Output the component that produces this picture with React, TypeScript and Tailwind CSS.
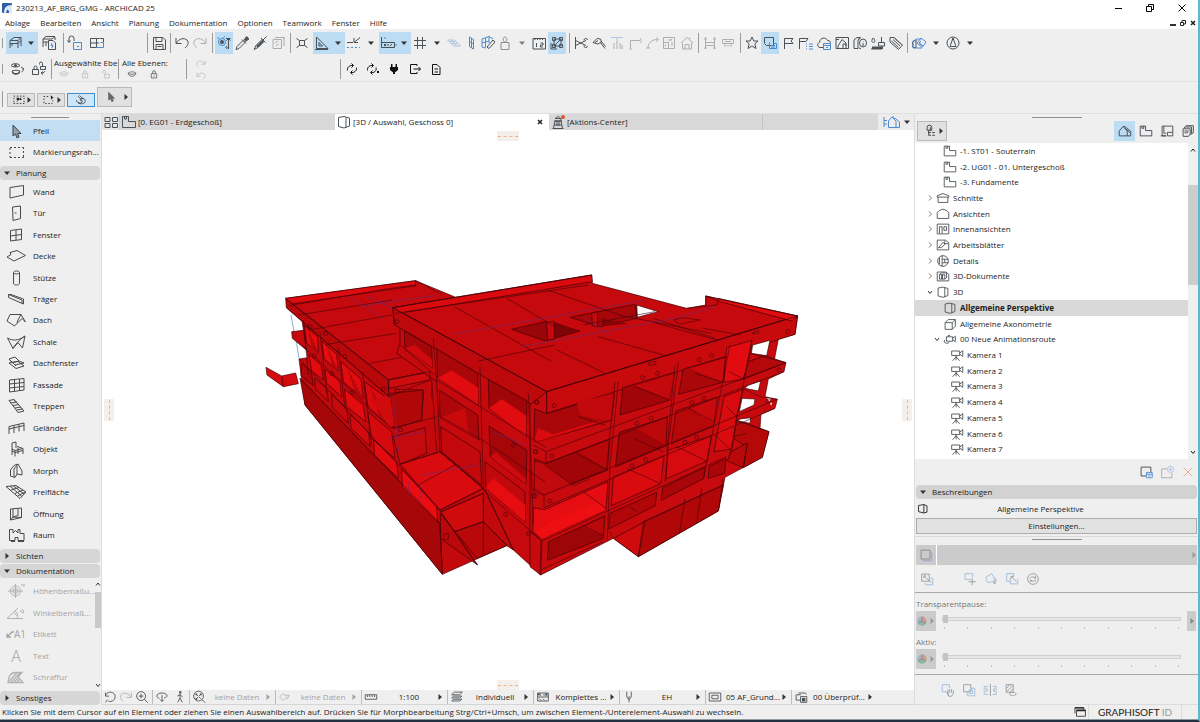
import { ReactNode, useState } from "react";
import clsx from "clsx";

interface Shape {
  d?: string;
  blue?: string;
  fill?: string;
}

// 18 x 18 glyphs of the tool bars
const glyphs: Record<string, Shape> = {
  desk: { d: "M4 6.500L8 3.500H15L12 6.500ZM4 6.500V14M4 9.500H12M12 6.500V14M15 3.500V12M6 9.500V12M12 9.500L15 6.500" },
  deskInfo: { d: "M3 5L6 2.500H15L12 5ZM3 5V13M3 8H8M6 8V12M15 3V6M8.500 6.500H13L15.500 9V15.500H8.500Z", blue: "M12 9L11 11.500H13L12 14" },
  inject: { d: "M3 8V4.500A2.500 2.500 0 0 1 8 4.500V7M1.500 6.500L3 8.500L4.500 6.500", blue: "M7.500 8.500H15.500V15.500H7.500ZM11 12.500H13" },
  book: { d: "M2.500 4.500H8.500V13.500H2.500ZM8.500 4.500H11M2.500 9H11M11.500 4.500H15.500V8", blue: "M8.500 13.500H15.500V8.500H12.500" },
  save: { d: "M3.500 3.500H13L15.500 6V15.500H3.500ZM6 3.500V7.500H12V3.500M6 15.500V10.500H13V15.500M7.500 12.500H11.500" },
  undo: { d: "M3 4V9.500H8.500M3.500 9C6 4.500 11 3.500 14 6C16.500 9 14.500 12 12 14" },
  redo: { d: "M15 4V9.500H9.500M14.500 9C12 4.500 7 3.500 4 6C1.500 9 3.500 12 6 14" },
  magnifySel: { d: "M11 4.500H15.500M13.500 4.500V15M11.500 6.500L13.500 4.500L15.500 6.500M11 12L13 14.500", blue: "M3.500 8A3.500 3.500 0 1 0 10.500 8A3.500 3.500 0 1 0 3.500 8M10 13L12 15M2.500 3.500L4.500 5M8 4L10 2.500", fill: "M5 8A2 2 0 1 0 9 8A2 2 0 1 0 5 8" },
  pipette: { d: "M3 15.500L4 12.500L10 6.500L12 8.500L6 14.500ZM9 5.500L13 9.500M11 6L13.500 2.500L16 5L12.500 7.500", fill: "M11 6L14 2.500L16 4.500L12.500 7.500Z" },
  syringe: { d: "M3 15.500L5 11.500L11 5.500L13 7.500L7 13.500ZM10 4L14.500 8.500M12 6L15.500 2.500", fill: "M5 12L11.500 6L13 7.500L7 13.500Z" },
  paste: { d: "M4 5.500H12.500V14.500H4ZM6 3.500H15V12M6 9L9 7M7 12L10 9.500M14 5L16 3" },
  suspend: { d: "M6.500 6.500H11.500V11.500H6.500ZM3.500 4.500L6.500 6.500M14.500 4.500L11.500 6.500M3.500 13.500L6.500 11.500M14.500 13.500L11.500 11.500" },
  setsquare: { d: "M3.500 3V14.500H15ZM6 8.500V12H9.500ZM2 15.500H15" },
  guide: { d: "M2 8.500H8M9 8.500L15 3.500M9 4V8.500H13", blue: "M2 13.500H4M6 13.500H8M10 13.500H12M14 13.500H15" },
  tracker: { d: "M2.500 3V13M2.500 8.500H15.500V13.500H2.500ZM5 10L7 12M7 10L5 12M9 10V12M13 10L11 12", blue: "M5 3L7 5M16 11H18" },
  grid: { d: "M6.500 3V15M11.500 3V15M3 6.500H15M3 11.500H15" },
  plane: { blue: "M2.500 6H9.500L15.500 12H8.500ZM4 7.500H11M6 9.500H13M6 6L12 12" },
  planeV: { blue: "M7.500 3L11.500 5.500V15L7.500 12.500ZM9.500 4V14M7.500 7.500L11.500 10" },
  planeEdit: { d: "M8 13L14 6L16 8L10 14.500Z", blue: "M3 5L10 2.500L14 5M3 5V13L7 14M3 9L10 7M6.500 4V13M10 2.500V9" },
  weight: { d: "M5 15.500V8.500H13V15.500ZM9 8.500C6 6.500 7 3 9 3S12 6.500 9 8.500" },
  ruler: { d: "M3 15V4.500H15.500V15ZM5 4V6M7.500 4V6M10 4V6M12.500 4V6M6.500 9V13M10.500 9H13V11H10.500V13H13" },
  nodes: { d: "M6 5H13V12H6ZM4.500 3.500H7.500V6.500H4.500ZM11.500 3.500H14.500V6.500H11.500ZM11.500 10.500H14.500V13.500H11.500ZM4.500 10.500H7.500V13.500H4.500ZM6 12L13 5M3 9V15H9" },
  scissor: { d: "M3.500 3V15M3.500 6.500L14 11.500M3.500 11.500L14 6.500M12 11.500A1.500 1.500 0 1 0 15.500 12M12 6.500A1.500 1.500 0 1 1 15.500 6" },
  hammer: { d: "M3 8.500L7 4.500L10.500 5L11.500 8L8 10ZM10 8L15 14.500M5 8.500L8 6.500M11 7L15.500 12.500" },
  extend: { d: "M6 9V15M9 7V15M12 9V15M14 11V15", blue: "M3 3.500H15M9 4V8" },
  corner: { d: "M4.500 14V6.500H14M14 4L15.500 6.500L14 9M3 15H6" },
  curve: { d: "M5 14C5 9 9 5.500 14 5.500M13 3.500L15.500 5.500L13 7.500M3 14H7" },
  resize: { d: "M3.500 3.500H14.500V14.500H3.500ZM3.500 8.500H8.500V14.500M8 6L12 6M12 6L11 5M12 8V12M5.500 10.500V12.500" },
  home: { d: "M3 9L9 3.500L15 9M4.500 9V15H13.500V9M7 15V10.500H11V15M12 5V3.500" },
  dimH: { d: "M4.500 3V15M13.500 3V15M3 5H6M12 5H15M4.500 8.500H13.500M4.500 11.500H13.500M3 14H6M12 14H15" },
  dimW: { d: "M3.500 5.500H14.500V9.500H3.500ZM6 9.500V13M12 9.500V13M8 11.500H10M6 7.500H12" },
  star: { d: "M9 3L10.800 7H15L11.800 9.800L13 14.500L9 12L5 14.500L6.200 9.800L3 7H7.200Z" },
  layers: { d: "M3.500 3.500H12.500V11.500H5.500L3.500 9.500Z", blue: "M8.500 8.500V14.500H15.500V9.500H12.500M10 11.500H14M10 13H14" },
  flag: { d: "M5.500 15V4.500H14L12 7L14 9.500H5.500" },
  flagList: { d: "M2.500 15V4.500H11L9 7.500H2.500", blue: "M9 10H10M12 10H16M9 12.500H10M12 12.500H16M9 15H10M12 15H16" },
  cloud: { d: "M8 13.500H5C2 13 2 9 4.500 8.500C5 3 11 3 12.500 6.500C15 6.500 15.500 8 15.500 9", blue: "M8.500 9.500H15.500V15.500H8.500ZM8.500 11.500H15.500M11 13.500H13" },
  houseDoc: { d: "M3 3.500H15.500V14.500H3ZM5 12L9 5.500L13 9V12M10 14V10H13V14M3 5.500H6M5 12V14" },
  docInfo: { d: "M3 6L6 3.500H9L7 6V14.500H3ZM7 6L10 3.500M8 14L10 14.500M8.500 9A3.500 4 0 1 0 15.500 9A3.500 4 0 1 0 8.500 9M12 7V7.500M12 9V12" },
  paint: { d: "M4 4C2 7 3 8.500 4.500 8.500S6.500 7 4.500 4M12.500 3V8M9.500 8.500H15.500V12H9.500ZM2 15H13", fill: "M3 12.500H14V15H3Z" },
  tag: { d: "M3 3.500H7L15.500 11L11.500 15.500L3 8ZM6 5.500L13 12M4.500 7L11.500 13.500M8 4.500L14.500 10.500" },
  model: { d: "M2.500 8L6 6V13.500H3Z", blue: "M3 7L7 5H11M7 9L11 4L16 8L12 13.500ZM3 7V14H12M9 8.500L13 12M11 7A2 2 0 1 0 12 11" },
  compass: { d: "M3 9A6 6 0 1 0 15 9A6 6 0 1 0 3 9M9 4L6 12.500H12ZM9 4V6" },
  eyes: { d: "M3 5.500C5 3 10 3 12 5.500C10 7.500 5 7.500 3 5.500M4 11C7 10 9 10 12 11C10 15 6 15 4 11M13 7C16 8 16 11 13.500 12M14.500 9.500L16 8", fill: "M6 5.500A1.500 1.500 0 1 0 9 5.500A1.500 1.500 0 1 0 6 5.500M4 11C6 14 10 14 12 11L12 13C9 15.500 6 15 4 13Z" },
  locks: { d: "M2.500 9.500H8.500V14.500H2.500ZM4 9.500V7.500A1.500 1.500 0 0 1 7 7.500V9.500M9.500 4.500V3.500A1.500 1.500 0 0 1 12.500 3.500V6.500M10.500 6.500H15.500V9.500H10.500ZM11 13C14 13 15 12 14.500 11M13 14.500L11 13L13 11.500" },
  refresh: { d: "M4.500 10.500C4 7 7 5 10 5.500M8.500 3.500L10.500 5.500L8.500 7.500M13.500 7.500C14 11 11 13 8 12.500M9.500 10.500L7.500 12.500L9.500 14.500" },
  refreshDot: { d: "M3.500 10.500C3 7 6 5 9 5.500M7.500 3.500L9.500 5.500L7.500 7.500M12 7.500C13 11 10 13 7 12.500M8.500 10.500L6.500 12.500L8.500 14.500", fill: "M13 11H15V13H13Z" },
  plug: { fill: "M6 4H7.500V7H10.500V4H12V7H13V10L10.500 12H10V14H8V12H7.500L5 10V7H6Z" },
  exit: { d: "M11 6V4.500H4.500V13.500H11V12M7.500 9H14.500M12.500 7L14.500 9L12.500 11" },
  doc: { d: "M5.500 4.500H10L13 7.500V14.500H5.500ZM7.500 9H11M7.500 12H11" },
  marquee: { d: "M2 4H4M6 4H8M10 4H12M14 4H16M2 13.500H4M6 13.500H8M10 13.500H12M14 13.500H16M2.500 6V8M2.500 10V12M15.500 6V8M15.500 10V12M6 11L12 6", fill: "M6 6H9V9H6ZM10 6L13 9L10 9Z" },
  marqueeArrow: { d: "M2 4.500H4M6 4.500H8M2.500 7V9M2.500 11V13M4 13.500H6M8 13.500H10M12 13.500H13.500M14 9.500V11", fill: "M11 3L15 6L13 7L12 9Z" },
  spiral: { d: "M3 9C4 14 11 15.500 14 12C15.500 9 13 6 10 7C7 8 8 11 10.500 10.500M5 4L11 10M7 3L12 8M5 12C7 13.500 10 13 11 11" },
  cursor: { d: "M6 3L6 13L8.500 11L10 15L12 14L10.500 10.500H13.500Z", fill: "M6 3L6 13L8.500 11L10 15L12 14L10.500 10.500H13.500Z" },
  tiles: { d: "M3 4.500H8V8.500H3ZM10.500 4.500H15.500V8.500H10.500ZM3 10.500H8V14.500H3ZM10.500 10.500H15.500V14.500H10.500Z" },
  storey: { d: "M2.500 3.500H8.500V8.500H15.500V14.500H2.500ZM4.500 3.500V6H6.500V3.500" },
  box3d: { d: "M3.500 4.500L9 3.500L14.500 5V13L9 15L3.500 13.500ZM11 4.500V14.500" },
  box3dDark: { d: "M4 5L10 4V13.500L4 12ZM10 4L13.500 5.500V12.500L10 13.500" },
  tower: { d: "M6 8L4.500 15.500H13.500L12 8ZM5 8H13M6 5.500H12V8M7 5.500C7 3 11 3 11 5.500M8 8V13M10 8V13M5 12H13M3.500 15.500H14.500" },
  viewHouse: { blue: "M2 4V14M2 7.500H5M2 11H5M6.500 14.500V8L10 4L14 8V14.500ZM12 5.500H13.500L17.500 9V14.500H14M10 4H12" },
  navHouse: { d: "M2.500 14.500V9L7 4L11.500 9V14.500ZM7 4H9L15.500 9.500V14.500H11.500M9 6L15 11" },
  layout: { d: "M5.500 3.500H3.500V14.500H8M5.500 3.500V11.500H8M5.500 3.500H15.500V14.500H9.500V10.500H15M2 14.500H8" },
  stack: { d: "M3.500 6.500H11.500V12.500L9.500 15H3.500ZM5 6V4.500H13V12L11.500 13M7 4V3H15V11L13 12.500M5 9H10M5 11H9" },
  tree: { d: "M4 4.500A3 3 0 0 1 10 4.500V8H4ZM6 8V14.500H9M6 11H9M8 4V8M10.500 11H14M10.500 14.500H14" },
  section: { d: "M2.500 6.500L9 4L15.500 6.500V8H2.500ZM3.500 8V14H14.500V8" },
  elevation: { d: "M2.500 14V7.500L5 5L9 3.500L13 5L15.500 7.500V14Z" },
  interior: { d: "M2.500 3.500H15.500V14.500H2.500ZM5 14V6.500H8V14M10 6.500H13V10.500H10Z" },
  worksheet: { d: "M2.500 3.500H12L15.500 6.500V14.500H2.500ZM4 12L9 6L11.500 8L7 12ZM11 4V7.500H15" },
  detail: { d: "M3 9A6 6 0 1 0 15 9A6 6 0 1 0 3 9M8 3V15M5 5V13M8 7H15M8 11H15M11 7V11" },
  doc3d: { d: "M2.500 4.500H12L15.500 7V14.500H2.500ZM5 7.500H11V12.500H5ZM5 7.500L7 5.500H13V11L11 12.500", fill: "M7 8H9V12.500H7Z" },
  axo: { d: "M3.500 7.500L7 4H15L11.500 7.500ZM3.500 7.500V15H11.500V7.500M15 4V11.500L11.500 15" },
  route: { d: "M5 6.500H12V11.500H5ZM12 8L15 6V12L12 10M3 10C1 13 5 15 8 13M7 6.500V5H9" },
  camera: { d: "M3 4.500H12V9.500H3ZM12 7L15.500 4V10.500L12 8M8 9.500V12M8 11L4 15.500M8 11L12 15.500M8 11V15" },
  newView: { d: "M9 13.500H3.500V3.500H14.500V9", blue: "M9.500 9.500H16V15.500H9.500ZM9.500 11.500H16M11.500 13.500H14" },
  newFolder: { d: "M9 5.500H3V15.500H14.500V10", blue: "M9.500 6A3.500 3.500 0 1 0 16.500 6A3.500 3.500 0 1 0 9.500 6M13 4V8M11 6H15" },
  close: { d: "M4 4L14 14M14 4L4 14" },
  square: { d: "M3.500 3.500H13.500V13.500H3.500Z", blue: "M5.500 15.500H15.500V5.500" },
  swap: { d: "M3 3.500H11.500V11.500H3ZM5.500 5.500L14 13M5.500 8V5.500H8", blue: "M7 13.500V15.500H15.500V8H13" },
  moveBox: { d: "M11.500 8V16M7.500 12H15.500", blue: "M10 9.500H3.500V3H12V7" },
  rotateBox: { d: "M13 8C16 10 15 12 12 13.500M13 11L12 13.500L14.500 14", blue: "M3 7L10 3L13 9L11 12L5 13Z" },
  mirrorBox: { d: "M8 6L14 12M8 9V6H11", blue: "M8 11.500H3V3H11V6M7 8V14.500H15.500V9" },
  cycle: { d: "M3 9A6 6 0 1 0 15 9A6 6 0 1 0 3 9M5.500 8.500C7 6 10 6 12 8M12 5.500V8H10M12.500 10C11 12 8 12 6 10.500M6 12.500V10.500H8" },
  hand: { d: "M9 13L7.500 11M9 15L9 8.500M11 8V12M13 8V12M15 9.500V13L13 16H10L8 12", blue: "M8 11H2.500V3H10.500V7" },
  overlap: { d: "M3 3H11V11H3Z", blue: "M7 11V15.500H15.500V7H11M9 9H13V13H9Z" },
  splitV: { d: "M9.500 2V16M4 7L6.500 9L4 11M15 7L12.500 9L15 11", blue: "M7 5H2.500V14H7M12 5H16V14H12" },
  hatch: { d: "M3.500 3H11.500V11.500H3.500ZM4 7L8 3M4 11L11 4M8 11L11 8M7 13.500C9 11 13 11 15 13.500C13 16 9 16 7 13.500" },
  zoomBack: { d: "M4 7.500C5 3 12 2 14.500 6.500C16 12 11 15.500 7 13.500M4 4V8H8M6 12L4 15" },
  zoomIn: { d: "M3 8A5 5 0 1 0 13 8A5 5 0 1 0 3 8M11.500 11.500L15.500 15.500M8 5.500V10.500M5.500 8H10.500" },
  orbit: { d: "M6 10.500C1 9 3 4.500 9 4.500S17 9 11.500 10M9 7V14M7 12L9 14L11 12" },
  walk: { d: "M9 5V10L6.500 15M9 10L11.500 15M6 8L9 6.500L12 9", fill: "M8 2.500H10.500V5H8Z" },
  zoomFit: { d: "M3 8A5.500 5.500 0 1 0 14 8A5.500 5.500 0 1 0 3 8M12.500 12L16 15.500M6 6L8 8M11 6L9 8M6 11L8 9M11 11L9 9", fill: "M5 5H7V7H5ZM10 5H12V7H10ZM5 10H7V12H5Z" },
  angle: { d: "M3 9L7 5L11 9L7 13ZM9 7L14 7L11 12" },
  scale: { d: "M2.500 6.500H15.500V11.500H2.500ZM5 7V9M7.500 7V9M10.500 7V9M13 7V9" },
  strata: { d: "M3 6.500L6 3.500H15L12 6.500ZM3 10L5 8H14.500L12 10ZM3 13.500L5 11.500H14.500L12 13.500Z" },
  structure: { d: "M3 4.500H15V13.500H3ZM3 9H15M5 6L7 8M9 6L11 8M5 11L7 13M9 11L11 13M12 6L14 8", fill: "M3 5H6V7H3ZM11 5H14V7H11Z" },
  pen: { d: "M6.500 3V9L9 12L11.500 9V3M9 12V15M9 8V12" },
  frame: { d: "M2.500 4.500H15.500V13.500H2.500ZM5.500 7H12.500V11H5.500Z" },
  renovation: { d: "M9 6.500H3.500V12.500H8M6 4.500H14L15 6M8.500 8.500H15.500V15H8.500Z", fill: "M10 10H14V14H10Z" },
  windows: { d: "M2.500 11V3.500H14V6M4.500 6.500H16V14.500H4.500Z", fill: "M4.500 6H16V8H4.500ZM2.500 3H14V4.500H2.500Z" },
  eye: { d: "M3 8C6 5 12 5 15 8C13 14 5 14 3 8M3 8C6 10 12 10 15 8" },
  lock: { d: "M5 8.500H13V15H5ZM7 8.500V6A2 2 0 0 1 11 6V8.500M9 11V13" },
  unlock: { d: "M7 9.500H14V15H7ZM4 8V5.500A2 2 0 0 1 8 5.500V9.500" },
};

// 20 x 16 glyphs of the toolbox
const toolPaths: Record<string, string> = {
  Pfeil: "M7 2L7 13L9.500 11L11 15L13 14L11.500 10.500H15Z",
  "Markierungsrah...": "M4 3.500H6M8 3.500H10M12 3.500H14M16 3.500H17.500V5M17.500 7V9M17.500 11V13.500H16M14 13.500H12M10 13.500H8M6 13.500H4V12M4 10V8M4 6V4",
  Wand: "M4 3.500L17.500 1.500V11L4 14Z",
  Tür: "M6.500 2L14.500 1V13.500L7 15.500ZM8.500 8H10.500",
  Fenster: "M4.500 3.500L15.500 2V12.500L4.500 14ZM10 3V13M4.500 9L15.500 7.500",
  Decke: "M1 9L5 6.500L4 4.500L11 2.500L19.500 7.500L8 13Z",
  Stütze: "M7.500 2.500C8 .5 13 .5 13.500 2.500V13.500C13 15.500 8 15.500 7.500 13.500ZM7.500 2.500C8 4.500 13 4.500 13.500 2.500",
  Träger: "M2.500 3.500L5 3.500L17.500 8V13L2.500 6.500ZM2.500 3.500L16 9V12.500",
  Dach: "M1 9L4 2.500H15L19.500 10L16 6.500L12 10.500L8.500 14ZM15 2.500L12 8L11 11",
  Schale: "M1.500 4C7 7 12 7 19 2L16.500 14L12 8.500L7 14.500ZM7 14.500C8 12 13 6 19 2",
  Dachfenster: "M3 4L9 2L13 6L6 7.500ZM3 8L12 6.500L18 11L10 13.500ZM3 4L10 11M13 6L18 8L9 10",
  Fassade: "M3.500 3L18 1.500V13L3.500 15ZM8.500 2.500V14.500M13.500 2V13.500M3.500 7L18 5.500M3.500 11L18 9.500",
  Treppen: "M3 2.500L8 1.500L18 13L12 14.500ZM5 5L11 4M7 7.500L13 6.500M9 10L15 9M10.500 12L17 11M8 1.500L9 3.500",
  Geländer: "M3 14V6.500L18 3V11M3 9L18 5.500M8 13V5.500M13 11.500V4.500",
  Objekt: "M6 8V2L10 1V7M6 8L9 9.500L17 7.500L11 5.500M6 8V14M9 9.500V15.500M17 7.500V13M12 7V13M6 10L9 11.500L17 9.500",
  Morph: "M4.500 13V7L8 2.500L12 1L16 8V12L11 11L9 14.500ZM8 14V6L12 1M11 11V3",
  Freifläche: "M0 2.500L10 1.500L20 8L14 14.500ZM4 2L16 12.500M7.500 2L18 10M5 6L13 3.500M9 9.500L17 6M11.500 12L19 8",
  Öffnung: "M4.500 3L15.500 2V11.500L4.500 14ZM7 3V11L15.500 11.500M12 2.500V9.500L7 11M4.500 14L7 11",
  Raum: "M3.500 2.500H7V6L9.500 3.500L12 6V2.500H14V6.500H18V13.500H12V10.500H9V13.500H3.500ZM5 14.500H9M12 14.500H18",
  "Höhenbemaßu...": "M4.500 8A5 5 0 1 0 14.500 8A5 5 0 1 0 4.500 8M9.500 1V15M2 8H17M7 8A2.500 2.500 0 1 0 12 8A2.500 2.500 0 1 0 7 8M15 2H17M18 1V4",
  "Winkelbemaß...": "M1 13.500H17M1 13.500L12 3M9 5.500C12 8 12 11 11 13.500M8 8L12 11M15 5A1.500 1.500 0 1 0 18 7L16 4",
};

interface GlyphProps {
  name: string;
  className?: string;
}

function Glyph({ name, className = "size-[18px] text-[#4a5157]" }: GlyphProps) {
  const { d, blue, fill } = glyphs[name];

  return (
    <svg viewBox="0 0 18 18" fill="none" stroke="currentColor" className={clsx("shrink-0", className)}>
      {fill && <path d={fill} fill="currentColor" stroke="none" />}
      {d && <path d={d} />}
      {blue && <path d={blue} stroke="#4c8ad0" />}
    </svg>
  );
}

function Arrow({ dir = "right", className = "text-[#333]" }: { dir?: "right" | "down"; className?: string }) {
  return (
    <svg viewBox="0 0 6 6" className={clsx("size-1.5 shrink-0", className)}>
      <path d={dir === "right" ? "M1.500 0L5 3L1.500 6Z" : "M0 1.500H6L3 5Z"} fill="currentColor" />
    </svg>
  );
}

function Chevron({ dir }: { dir: "up" | "down" | "right" }) {
  const paths = { up: "M1 4.500L3 2L5 4.500", down: "M1 2L3 4.500L5 2", right: "M2 .5L4.500 3L2 5.500" };

  return (
    <svg viewBox="0 0 6 6" className="size-1.5 shrink-0" fill="none" stroke="currentColor">
      <path d={paths[dir]} />
    </svg>
  );
}

function Sep() {
  return (
    <span className="w-1.5 shrink-0 flex justify-center">
      <span className="w-px h-5 bg-[#9b9b9b]" />
    </span>
  );
}

interface ToolProps {
  icon: string;
  on?: boolean;
  off?: boolean;
  arrow?: boolean;
  slim?: boolean;
}

function Tool({ icon, on, off, arrow, slim }: ToolProps) {
  return (
    <button
      aria-label={icon}
      className={clsx(
        "h-[22px] shrink-0 flex items-center",
        arrow ? (on ? "w-8" : "w-[34px]") : slim ? "w-[17px]" : "w-[18px]",
        on && "bg-[#bcdcf4]",
        off && "opacity-40"
      )}
    >
      <Glyph name={icon} />
      {arrow && (
        <span className="flex-1 flex justify-center">
          <Arrow dir="down" />
        </span>
      )}
    </button>
  );
}

const menus = ["Ablage", "Bearbeiten", "Ansicht", "Planung", "Dokumentation", "Optionen", "Teamwork", "Fenster", "Hilfe"];

function TitleBar() {
  return (
    <header className="bg-white">
      <div className="h-4 flex items-center pl-0.5">
        <svg viewBox="0 0 10 10" className="size-2.5">
          <rect width="10" height="10" rx="1" fill="#2d5fa8" />
          <path d="M2 10C2 5 4 2 10 2V10H7C7 7 6 6 5 7L4 10Z" fill="#dbe8f8" />
        </svg>
        <h1 className="ml-1 flex-1">230213_AF_BRG_GMG - ARCHICAD 25</h1>
        <button aria-label="Minimieren" className="w-8 flex justify-center">
          <span className="w-[7px] h-px bg-black" />
        </button>
        <button aria-label="Wiederherstellen" className="w-8 flex justify-center">
          <svg viewBox="0 0 8 8" className="size-2" fill="none" stroke="#000">
            <path d="M.5 2.500H5.500V7.500H.5ZM2.500 2V.5H7.500V5.500H6" />
          </svg>
        </button>
        <button aria-label="Schließen" className="w-8 flex justify-center">
          <svg viewBox="0 0 8 8" className="size-2" fill="none" stroke="#000">
            <path d="M.5 .5L7.500 7.500M7.500 .5L.5 7.500" />
          </svg>
        </button>
      </div>
      <nav className="h-[13px] flex items-center pl-[5px] gap-[10px]">
        {menus.map((menu) => (
          <button key={menu}>{menu}</button>
        ))}
        <div className="ml-auto flex items-center gap-1 pr-0.5">
          <span className="w-1.5 h-0.5 bg-[#333] mt-1" />
          <svg viewBox="0 0 6 6" className="size-1.5" fill="none" stroke="#222">
            <path d="M.5 2.500H3.500V5.500H.5ZM2 2V.5H5.500V4H4" />
          </svg>
          <svg viewBox="0 0 6 6" className="size-1.5" fill="none" stroke="#222">
            <path d="M1 1L5 5M5 1L1 5" strokeWidth="1.500" />
          </svg>
        </div>
      </nav>
    </header>
  );
}

function MainToolbar() {
  return (
    <div className="h-7 flex items-center pl-0.5">
      <span className="w-1 shrink-0">
        <span className="block w-px h-2.5 bg-[#9b9b9b]" />
      </span>
      <Tool icon="desk" on arrow />
      <span className="w-0.5" />
      <Tool icon="deskInfo" />
      <span className="w-0.5" />
      <Sep />
      <Tool icon="inject" />
      <span className="w-1" />
      <Tool icon="book" />
      <span className="w-[38px]" />
      <Sep />
      <Tool icon="save" slim />
      <Sep />
      <Tool icon="undo" />
      <Tool icon="redo" off />
      <Sep />
      <Tool icon="magnifySel" on />
      <Tool icon="pipette" />
      <Tool icon="syringe" />
      <Tool icon="paste" off />
      <Sep />
      <Tool icon="suspend" />
      <span className="w-0.5" />
      <Tool icon="setsquare" on arrow />
      <Tool icon="guide" arrow />
      <Tool icon="tracker" on arrow />
      <Tool icon="grid" arrow />
      <Tool icon="plane" slim off />
      <Tool icon="planeV" slim />
      <Tool icon="planeEdit" slim />
      <span className="flex opacity-60">
        <Tool icon="weight" arrow />
      </span>
      <Tool icon="ruler" />
      <Tool icon="nodes" on />
      <Sep />
      <Tool icon="scissor" />
      <Tool icon="hammer" />
      <Tool icon="extend" off />
      <Tool icon="corner" off slim />
      <Tool icon="curve" off slim />
      <Tool icon="resize" off />
      <Tool icon="home" off slim />
      <Sep />
      <Tool icon="dimH" off />
      <Tool icon="dimW" off />
      <Sep />
      <Tool icon="star" />
      <Tool icon="layers" on />
      <Tool icon="flag" />
      <Tool icon="flagList" />
      <Tool icon="cloud" />
      <Tool icon="houseDoc" />
      <Tool icon="docInfo" />
      <Tool icon="paint" />
      <Tool icon="tag" slim />
      <Sep />
      <Tool icon="model" arrow />
      <Tool icon="compass" arrow />
    </div>
  );
}

function LayerToolbar() {
  const small = "size-3 text-[#3d444a]";
  const smallOff = "size-3 text-[#b4b4b4]";

  return (
    <div className="h-[25px] flex items-center pl-0.5 border-b border-[#e2e2e2]">
      <span className="w-1.5">
        <span className="block w-px h-2.5 bg-[#9b9b9b]" />
      </span>
      <Tool icon="eyes" />
      <span className="w-1" />
      <Tool icon="locks" />
      <Sep />
      <div className="w-16 h-full flex flex-col whitespace-nowrap">
        <span className="h-[11px] pt-0.5">Ausgewählte Ebe</span>
        <div className="flex justify-between pl-1 pr-1.5">
          <Glyph name="eye" className={smallOff} />
          <Glyph name="lock" className={smallOff} />
          <Glyph name="unlock" className={smallOff} />
        </div>
      </div>
      <span className="w-1 h-5 border-l border-[#9b9b9b]" />
      <div className="w-[61px] h-full flex flex-col whitespace-nowrap">
        <span className="h-[11px] pt-0.5">Alle Ebenen:</span>
        <div className="flex gap-2.5 pl-1">
          <Glyph name="eye" className={small} />
          <Glyph name="lock" className={small} />
        </div>
      </div>
      <Sep />
      <div className="w-[148px] h-full flex flex-col pl-1.5 pt-px">
        <Glyph name="redo" className={smallOff} />
        <Glyph name="undo" className={smallOff} />
      </div>
      <Sep />
      <div className="flex gap-[3px]">
        {["refresh", "refreshDot", "plug", "exit", "doc"].map((icon) => (
          <button key={icon} aria-label={icon}>
            <Glyph name={icon} className="size-[18px] text-[#111]" />
          </button>
        ))}
      </div>
    </div>
  );
}

function SelectionToolbar() {
  const base = "h-3.5 w-7 border border-[#b9b9b9] bg-[#e1e1e1] flex items-center justify-between px-1";

  return (
    <div className="h-8 flex items-end pl-0.5 pb-1.5 border-b border-[#dedede]">
      <span className="w-px h-4 bg-[#9b9b9b] mr-1" />
      <button aria-label="Markierung" className={base}>
        <Glyph name="marquee" className="size-3.5 text-[#222]" />
        <Arrow />
      </button>
      <button aria-label="Auswahl" className={clsx(base, "ml-0.5")}>
        <Glyph name="marqueeArrow" className="size-3.5 text-[#222]" />
        <Arrow />
      </button>
      <button aria-label="Schnellwahl" className="h-3.5 w-7 ml-0.5 border border-[#3c8fd0] bg-[#cde6f8] flex items-center justify-center">
        <Glyph name="spiral" className="size-3.5 text-[#333]" />
      </button>
      <button aria-label="Pfeil" className="h-5 w-[35px] ml-0.5 border border-[#b9b9b9] bg-[#e1e1e1] flex items-center justify-between pl-1.5 pr-0.5">
        <Glyph name="cursor" className="size-3.5 text-[#666]" />
        <Arrow />
      </button>
    </div>
  );
}

const planning = [
  "Wand", "Tür", "Fenster", "Decke", "Stütze", "Träger", "Dach", "Schale", "Dachfenster",
  "Fassade", "Treppen", "Geländer", "Objekt", "Morph", "Freifläche", "Öffnung", "Raum",
];

const documentation = ["Höhenbemaßu...", "Winkelbemaß...", "Etikett", "Text", "Schraffur"];

function ToolIcon({ name }: { name: string }) {
  if (name === "Text") {
    return <span className="w-5 shrink-0 text-center text-[16px] leading-4 font-light">A</span>;
  }

  if (name === "Etikett") {
    return (
      <span className="w-5 h-4 shrink-0 flex items-center justify-end">
        <svg viewBox="0 0 8 8" className="size-2" fill="none" stroke="currentColor">
          <path d="M1 7L6 2H8M1 3.500V7H5" strokeWidth="1.300" />
        </svg>
        <span className="text-[10px] leading-4">A1</span>
      </span>
    );
  }

  return (
    <svg viewBox="0 0 20 16" className="w-5 h-4 shrink-0 opacity-80" fill="none" stroke="currentColor">
      {name === "Schraffur" ? (
        <path d="M2 13.500C2 8 5 3.500 9 3.500H16L12 8L17 13.500ZM3 12L11 4M5 13L14 4M8 13L12 9M11 13L14 10" strokeWidth="1.300" />
      ) : (
        <path d={toolPaths[name]} fill={name === "Pfeil" ? "#8a9096" : "none"} />
      )}
    </svg>
  );
}

function ToolGroup({ title, open }: { title: string; open?: boolean }) {
  return (
    <button className="h-3.5 shrink-0 w-full flex items-center gap-1.5 px-1 rounded-sm bg-[#d6d6d6] text-left">
      <Arrow dir={open ? "down" : "right"} />
      {title}
    </button>
  );
}

function Toolbox() {
  const [active, setActive] = useState("Pfeil");

  const row = (name: string) => (
    <li key={name} className="flex-1 flex">
      <button
        onClick={() => setActive(name)}
        className={clsx(
          "flex-1 flex items-center gap-[7px] pl-1.5 whitespace-nowrap",
          active === name && "bg-[#c3def3]"
        )}
      >
        <ToolIcon name={name} />
        {name}
      </button>
    </li>
  );

  return (
    <aside className="w-[102px] shrink-0 flex flex-col border-r border-[#dcdcdc] pr-px font-medium">
      <span className="w-[38px] h-px mt-[3px] mb-0.5 bg-[#8f8f8f] self-center" />
      <ul className="h-[42px] flex flex-col">{["Pfeil", "Markierungsrah..."].map(row)}</ul>
      <span className="h-1" />
      <ToolGroup title="Planung" open />
      <ul className="flex-[17] flex flex-col text-[#222] mt-px mb-[3px]">{planning.map(row)}</ul>
      <ToolGroup title="Sichten" />
      <span className="h-px" />
      <ToolGroup title="Dokumentation" open />
      <div className="flex-[5] flex text-[#a3a3a3] my-[3px]">
        <ul className="w-[95px] flex flex-col">{documentation.map(row)}</ul>
        <div className="flex-1 flex flex-col items-center justify-between text-[#333]">
          <Chevron dir="up" />
          <span className="w-full h-9 -mt-12 bg-[#c9c9c9]" />
          <Chevron dir="down" />
        </div>
      </div>
      <ToolGroup title="Sonstiges" />
    </aside>
  );
}

function TabBar() {
  return (
    <div className="h-4 flex items-stretch bg-[#d8d8d8]">
      <button aria-label="Übersicht" className="w-[18px] bg-[#e6e6e6] flex items-center justify-center border-r border-[#cfcfcf]">
        <Glyph name="tiles" />
      </button>
      <button className="w-[215px] shrink flex items-center">
        <Glyph name="storey" />[0. EG01 - Erdgeschoß]
      </button>
      <button className="w-[214px] shrink flex items-center bg-white">
        <Glyph name="box3d" />[3D / Auswahl, Geschoss 0]
        <svg viewBox="0 0 6 6" className="size-1.5 ml-auto mr-1.5" stroke="#222" strokeWidth="1.500">
          <path d="M1 1L5 5M5 1L1 5" />
        </svg>
      </button>
      <button className="w-[214px] shrink flex items-center border-r border-[#c4c4c4]">
        <span className="relative">
          <Glyph name="tower" />
          <span className="absolute top-0.5 right-0.5 size-1 rounded-full bg-[#e4512b]" />
        </span>
        [Aktions-Center]
      </button>
      <span className="flex-1" />
      <button aria-label="Ansicht" className="w-9 bg-[#ececec] flex items-center justify-between px-1">
        <Glyph name="viewHouse" />
        <Arrow dir="down" />
      </button>
    </div>
  );
}

// bright interiors and dark openings of the west block, drawn in thirds of a unit
const westWindows = [
  ["#e20c10", "148,182 188,215 190,262 155,235"],
  ["#e80d11", "200,228 245,268 250,318 208,282"],
  ["#e20c10", "258,290 318,342 325,402 265,350"],
  ["#d90b0f", "328,350 395,398 412,488 340,432"],
  ["#e20c10", "162,268 198,300 205,345 170,318"],
  ["#e20c10", "210,312 255,350 260,396 215,355"],
  ["#e20c10", "268,372 325,420 332,470 275,425"],
  ["#d50a0e", "338,440 410,500 420,580 350,520"],
  ["#b00709", "140,295 168,318 175,362 138,332"],
  ["#c60a0d", "178,340 215,370 220,410 182,372"],
  ["#c60a0d", "230,388 275,430 280,475 232,428"],
  ["#d00a0e", "285,448 340,500 346,545 288,490"],
  ["#e20c10", "356,525 425,590 430,640 358,570"],
  ["#ea0e12", "440,612 545,722 548,772 442,665"],
];

const eastWindows = [
  ["#a50608", "448,198 530,245 532,308 450,250"],
  ["#a90709", "545,252 668,325 670,420 548,338"],
  ["#a00507", "700,343 816,408 814,516 702,430"],
  ["#ad0709", "553,375 668,450 672,525 555,458"],
  ["#a50608", "702,483 816,556 813,658 706,576"],
  ["#c4090c", "557,485 675,560 680,660 560,560"],
  ["#c0090c", "690,590 810,680 810,772 692,668"],
  ["#a50608", "838,430 872,448 868,540 838,520"],
  ["#b50709", "838,580 866,595 866,680 836,665"],
];

const eastFloors = [
  ["#e00c10", "548,338 590,316 670,368 670,420"],
  ["#e00c10", "702,430 740,402 814,452 814,516"],
  ["#cf0a0e", "450,250 480,240 532,285 532,308"],
  ["#cf0a0e", "706,576 722,562 813,640 813,658"],
  ["#e60d11", "692,668 715,640 810,720 810,772"],
  ["#c80a0d", "555,458 630,430 640,500 672,525"],
];

const southWindows = [
  ["#a90709", "14,432 50,446 254,386 244,466 40,524 12,530"],
  ["#a20507", "278,368 434,322 418,406 270,450"],
  ["#a90709", "460,312 586,276 578,352 446,388"],
  ["#a20507", "14,582 48,595 240,522 232,616 40,690 12,680"],
  ["#a20507", "268,502 412,456 408,542 256,606"],
  ["#b70809", "438,438 562,396 550,484 424,536"],
  ["#e50d11", "10,728 44,734 234,650 228,734 36,822 8,800"],
  ["#da0b0f", "250,636 402,572 392,656 244,722"],
  ["#d60b0f", "414,556 544,512 532,588 408,642"],
  ["#9e0507", "56,830 225,752 220,820 52,886"],
  ["#b10709", "240,745 380,682 376,722 236,792"],
  ["#a80608", "398,668 526,606 522,640 394,706"],
  ["#a80608", "538,604 588,580 584,625 534,640"],
  ["#e20c10", "590,248 666,226 654,300 640,342 582,352"],
  ["#d80b0f", "582,395 640,372 620,455 606,552 552,560"],
  ["#b80809", "602,560 652,535 640,608 592,588"],
];

const southFloors = [
  ["#c4090c", "140,410 254,386 244,462 228,468 150,450"],
  ["#d90b0f", "12,530 24,490 70,508 190,472 225,468 40,524"],
  ["#c4090c", "315,362 434,326 418,404"],
  ["#cb0a0d", "480,312 584,280 578,350"],
  ["#b90809", "145,562 236,526 232,612"],
  ["#c00a0d", "45,600 130,662 40,690 14,680 14,590"],
  ["#bb080b", "318,490 410,460 406,540"],
  ["#c60a0d", "480,428 560,400 550,480"],
  ["#ee0f13", "60,770 200,712 228,734 36,822 12,800"],
  ["#b90809", "160,786 222,758 218,812"],
];

const lines = [
  // west roof
  "M103 122L405 70L483 60M130 150L320 120L412 105M162 195L410 150M214 238L425 205M345 295L440 277M482 47L560 88",
  "M94 103L400 345L525 320V345L402 395L94 128M400 345V395M530 345V400",
  "M145 165L160 330M195 200L215 385M250 250L270 430M322 320L350 540M140 240L410 490M133 282L430 600M430 600L555 738M135 340L555 775",
  "M415 372L505 375L500 470M415 490L545 455M530 345L545 560M435 598L555 560L685 670L555 735",
  "M555 560L680 665M490 660L600 600M555 740L685 685V870M600 800L685 770L755 840M555 775L562 928M560 745L665 900M690 675L775 855",
  // main roof
  "M413 128L1010 30M420 145L1000 60M598 125L890 290M755 100L900 185M670 288L900 240M880 76L1095 150",
  "M905 255L1050 325M1030 215L1225 270M1195 160L1380 220M1090 150L1370 205M985 180L1200 140",
  "M413 128L875 380L1628 153M875 380V445M535 220L545 350M675 305L685 670M820 385L835 780",
  "M545 345L875 548M555 455L690 530L870 650M685 675L858 825L855 930M435 240L540 330",
];

const southLines = [
  "M265 350L240 600L232 825M445 290L415 540L405 650M600 240L520 640M255 350L230 610M435 300L410 560M665 226L600 570",
  "M10 540L48 560L768 293M48 560V595L762 320M10 670L42 690L742 403M42 690V728L735 430",
  "M0 800L36 828L590 575M36 828L32 930M32 915L220 830M250 820L240 800M340 770L325 875M465 700L448 805M515 670L500 775M580 640L565 738",
  "M345 770L580 660M145 455L225 480M315 365L420 405M495 325L578 352M140 565L232 616M45 600L130 662L180 642M310 520L400 560M475 430L550 470",
  "M160 680L228 730M290 610L392 656M440 545L530 588M160 782L220 812M300 725L320 740M555 510L602 555M597 320L640 342M590 425L620 455",
  "M370 172L560 225M520 190L630 210M430 165L460 158L510 165L450 178ZM320 120V160M470 130L560 120L565 100L803 153M527 93V120",
  "M650 545L640 605M625 470L660 480L700 495M610 515L650 505M650 290L660 265L768 293M640 372L690 395L742 403",
];

const westBolts = [
  [165, 185], [270, 275], [385, 372], [427, 378], [437, 494], [292, 382], [230, 325], [178, 272],
  [845, 410], [842, 560], [838, 692], [820, 806], [752, 748], [776, 540], [212, 205], [425, 170],
];

const southBolts = [
  [20, 412], [72, 422], [338, 338], [383, 325], [508, 284], [545, 271], [16, 560], [66, 573], [321, 475], [364, 460],
  [486, 413], [522, 400], [12, 694], [60, 708], [306, 602], [347, 584], [465, 532], [500, 517], [774, 200], [715, 408], [747, 315],
];

function Building() {
  return (
    <svg viewBox="102 130 812 560" className="w-full h-full" role="img" aria-label="3D-Modell">
      <g transform="translate(255 265) scale(.33333)" stroke="#3d0205" strokeWidth="2" strokeLinejoin="round">
        <path d="M108 150L118 205M124 230L132 280" stroke="#4d87b5" />
        <path d="M33 307L80 333L122 324L130 356L85 365L36 330Z" fill="#d40b0f" />
        <path d="M80 333L85 365" />
        <path d="M110 200L145 196L160 260L112 220Z" fill="#c4090c" />
        <path d="M140 160L400 360L520 320H560V560L690 675L775 855L755 842L562 928L150 420L132 282L158 278Z" fill="#c4090c" />
        <path d="M135 340L555 775L562 928L150 420Z" fill="#a60709" />
        <path d="M557 742L685 685V770L600 800Z" fill="#cf0b0e" />
        <path d="M600 800L685 770L755 842L665 880Z" fill="#b80809" />
        <path d="M556 745L556 820L668 900L600 800Z" fill="#bb080b" />
        {westWindows.map(([fill, points]) => (
          <polygon key={points} points={points} fill={fill} />
        ))}
        <path d="M158 190L190 262L170 245ZM215 240L250 318L232 302ZM275 305L325 402L300 380ZM345 365L412 488L375 458Z" fill="#b70809" stroke="none" />
        <path d="M405 385L505 375L500 465L415 490Z" fill="#b00709" />
        <path d="M350 405L405 388L418 480L405 488Z" fill="#d00b0e" stroke="none" />
        <path d="M415 515L510 488L515 565L435 598Z" fill="#c50a0d" />
        <path d="M435 598L555 560L685 670L555 735Z" fill="#d90b0f" />
        <path d="M92 100L482 47L600 96L560 200L525 320L400 345Z" fill="#c5090c" />
        <path d="M92 100L482 47L482 62L110 117Z" fill="#dd0c10" />
        <path d="M92 100L400 345L402 395L94 128Z" fill="#b9080a" />
        <path d="M400 345L525 320V345L402 370Z" fill="#ce0b0e" />
        {/* main block */}
        <path d="M413 128L875 380L875 545L858 930L775 855L690 675L555 560L545 350L425 265L435 235V185L418 178Z" fill="#c5090c" />
        <path d="M413 128L1010 30L1012 55L1295 130L1352 120V93L1628 153L875 380Z" fill="#c5090c" />
        <path d="M413 128L1010 30L1012 50L432 145Z" fill="#d90b0f" />
        <path d="M413 128L875 380V445L420 180Z" fill="#bd090b" />
        {eastWindows.map(([fill, points]) => (
          <polygon key={points} points={points} fill={fill} />
        ))}
        {eastFloors.map(([fill, points]) => (
          <polygon key={points} points={points} fill={fill} stroke="none" />
        ))}
        <path d="M770 193L870 170L975 198L870 228Z" fill="#980609" />
        <path d="M900 172L975 198L900 218Z" fill="#7c0306" stroke="none" />
        <path d="M875 172L898 170V222L878 226Z" fill="#c5090c" />
        <path d="M945 157L1140 118L1145 160L1035 185Z" fill="#a8070a" />
        <path d="M1040 160L1120 176L1040 184Z" fill="#850406" stroke="none" />
        <path d="M1010 145L1028 140V185L1012 182Z" fill="#c5090c" />
        <path d="M1145 120L1210 140L1147 157Z" fill="#fff" />
      </g>
      <g transform="translate(530 265) scale(.33333)" stroke="#3d0205" strokeWidth="2" strokeLinejoin="round">
        <path
          d="M50 380L803 153L795 208L745 222L733 285L768 293L762 320L715 342L705 395L742 403L735 430L693 448L690 490L717 500L697 577L585 637L565 738L325 875L250 820L32 930L0 905L0 420Z"
          fill="#c70a0d"
        />
        <path d="M50 380L803 153L795 208L50 445Z" fill="#c80a0d" />
        <path d="M527 93L803 153L785 168L570 110Z" fill="#e00c10" />
        <path d="M620 465L717 500L697 577L640 608L650 545L610 520Z" fill="#b40809" />
        <path d="M340 770L580 660L565 738L325 875Z" fill="#b10709" />
        <path d="M250 820L345 770L325 875Z" fill="#cf0b0e" />
        {southWindows.map(([fill, points]) => (
          <polygon key={points} points={points} fill={fill} />
        ))}
        {southFloors.map(([fill, points]) => (
          <polygon key={points} points={points} fill={fill} stroke="none" />
        ))}
        <path d="M668 240L720 226L710 272L664 265ZM654 360L692 348L685 378L645 370ZM636 400L675 402L672 420L628 440ZM630 462L662 458L660 475L625 468Z" fill="#fff" />
        <path d="M655 290L705 272L768 293L640 342Z" fill="#b5080a" />
        <path d="M710 400L722 398L720 410ZM720 415L726 412L724 422Z" fill="#fff" stroke="none" />
      </g>
      <g fill="none" stroke="#43040a" strokeWidth="1.800">
        <g transform="translate(255 265) scale(.33333)">
          {lines.map((d) => (
            <path key={d} d={d} />
          ))}
          <path
            d="M280 95L385 160M340 95L412 130M322 122L540 92M595 208L1170 105M800 245L1260 160L1380 125M985 155L1065 210M710 500L812 540M415 400L430 560M400 520L510 500M500 630L670 600M460 650V690M495 660V710"
            stroke="#6b2a70"
          />
          {westBolts.map(([x, y]) => (
            <circle key={`${x}-${y}`} cx={x} cy={y} r="6" />
          ))}
          <path d="M565 808L580 805V822L567 825Z" />
        </g>
        <g transform="translate(530 265) scale(.33333)">
          {southLines.map((d) => (
            <path key={d} d={d} />
          ))}
          {southBolts.map(([x, y]) => (
            <circle key={`${x}-${y}`} cx={x} cy={y} r="6" />
          ))}
          <path d="M356 294L378 289V298L356 302ZM668 202L686 196V204L668 207Z" />
        </g>
      </g>
    </svg>
  );
}

// dashed handles on the edges of the model window
function Handle({ vertical, className }: { vertical?: boolean; className: string }) {
  return (
    <span className={clsx("absolute bg-[#f4efeb] flex items-center justify-center", vertical ? "w-2.5 h-[22px]" : "w-[22px] h-2.5", className)}>
      <span className={clsx("border-[#ecb48f] border-dashed", vertical ? "h-5 border-l" : "w-5 border-t")} />
    </span>
  );
}

interface NavCellProps {
  icon: string;
  label: string;
  off?: boolean;
}

function NavCell({ icon, label, off }: NavCellProps) {
  return (
    <button className={clsx("w-[86px] h-full shrink-0 flex items-center border-l border-[#bcbcbc] pr-1 whitespace-nowrap", off && "text-[#a3a3a3]")}>
      <Glyph name={icon} className={clsx("size-4 ml-px", off && icon !== "zoomFit" ? "text-[#b8b8b8]" : "text-[#4a5157]")} />
      <span className="flex-1 pl-0.5 text-center">{label}</span>
      <Arrow className={off ? "text-[#a3a3a3]" : "text-[#333]"} />
    </button>
  );
}

function NavigationBar() {
  return (
    <div className="h-[15px] shrink-0 flex items-center border-b border-[#d5d5d5] bg-[#efefef]">
      {["zoomBack", "redo", "zoomIn"].map((icon) => (
        <button key={icon} aria-label={icon} className={clsx("w-4 flex justify-center", icon === "redo" && "opacity-40")}>
          <Glyph name={icon} className="size-4 text-[#4a5157]" />
        </button>
      ))}
      <span className="w-px h-full bg-[#bcbcbc] ml-0.5" />
      {["orbit", "walk"].map((icon) => (
        <button key={icon} aria-label={icon} className="w-[18px] flex justify-center">
          <Glyph name={icon} className="size-4 text-[#4a5157]" />
        </button>
      ))}
      <NavCell icon="zoomFit" label="keine Daten" off />
      <NavCell icon="angle" label="keine Daten" off />
      <NavCell icon="scale" label="1:100" />
      <NavCell icon="strata" label="Individuell" />
      <NavCell icon="structure" label="Komplettes ..." />
      <NavCell icon="pen" label="EH" />
      <NavCell icon="frame" label="05 AF_Grund..." />
      <NavCell icon="renovation" label="00 Überprüf..." />
    </div>
  );
}

interface TreeItem {
  label: string;
  icon: string;
  indent: string;
  state?: "open" | "closed";
}

const tree: TreeItem[] = [
  { label: "-1. ST01 - Souterrain", icon: "storey", indent: "pl-[27px]" },
  { label: "-2. UG01 - 01. Untergeschoß", icon: "storey", indent: "pl-[27px]" },
  { label: "-3. Fundamente", icon: "storey", indent: "pl-[27px]" },
  { label: "Schnitte", icon: "section", indent: "pl-3", state: "closed" },
  { label: "Ansichten", icon: "elevation", indent: "pl-3", state: "closed" },
  { label: "Innenansichten", icon: "interior", indent: "pl-3", state: "closed" },
  { label: "Arbeitsblätter", icon: "worksheet", indent: "pl-3", state: "closed" },
  { label: "Details", icon: "detail", indent: "pl-3", state: "closed" },
  { label: "3D-Dokumente", icon: "doc3d", indent: "pl-3", state: "closed" },
  { label: "3D", icon: "box3d", indent: "pl-3", state: "open" },
  { label: "Allgemeine Perspektive", icon: "box3d", indent: "pl-[27px]" },
  { label: "Allgemeine Axonometrie", icon: "axo", indent: "pl-[27px]" },
  { label: "00 Neue Animationsroute", icon: "route", indent: "pl-[19px]", state: "open" },
  ...[1, 2, 3, 4, 5, 6, 7].map((n) => ({ label: `Kamera ${n}`, icon: "camera", indent: "pl-[34px]" })),
];

function ProjectTree() {
  const [selected, setSelected] = useState("Allgemeine Perspektive");

  return (
    <div className="flex-1 flex bg-white">
      <ul className="flex-1 flex flex-col pb-0.5">
        {tree.map(({ label, icon, indent, state }) => (
          <li key={label} className="flex-1 flex">
            <button
              onClick={() => setSelected(label)}
              className={clsx("flex-1 flex items-center", indent, selected === label && "bg-[#d9d9d9] font-bold")}
            >
              {state && (
                <span className={clsx("mr-0.5", state === "open" ? "text-[#333]" : "text-[#777]")}>
                  <Chevron dir={state === "open" ? "down" : "right"} />
                </span>
              )}
              <Glyph name={icon} className="size-4 -my-0.5 mr-0.5 text-[#4a5157]" />
              {label}
            </button>
          </li>
        ))}
      </ul>
      <div className="w-2.5 bg-[#f0f0f0] flex flex-col items-center py-1">
        <Chevron dir="up" />
        <span className="mt-8 w-full h-[100px] bg-[#cdcdcd]" />
        <span className="flex-1" />
        <Chevron dir="down" />
      </div>
    </div>
  );
}

function IconRow({ children, className }: { children: ReactNode; className?: string }) {
  return <div className={clsx("flex items-center", className)}>{children}</div>;
}

function ColorWheel() {
  return (
    <svg viewBox="0 0 10 10" className="size-2.5">
      <circle cx="5" cy="5" r="4.500" fill="#9db4c9" />
      <path d="M5 5V.5A4.500 4.500 0 0 1 9 7.200Z" fill="#d99a90" />
      <path d="M5 5L9 7.200A4.500 4.500 0 0 1 1 7.200Z" fill="#8fb79b" />
      <path d="M5 .5V5L1 7.200M5 5L9 7.200" stroke="#777" strokeWidth=".6" fill="none" />
    </svg>
  );
}

function OpacitySlider({ id, label, more }: { id: string; label: string; more?: boolean }) {
  return (
    <div className="text-[#777]">
      <label htmlFor={id} className="block h-[18px] pt-1 pl-px leading-[14px]">
        {label}
      </label>
      <div className="h-5 flex pl-px">
        <button aria-label="Farbe" className="w-5 h-5 bg-[#cbcbcb] flex items-center justify-center gap-0.5">
          <ColorWheel />
          <Arrow className="text-[#999]" />
        </button>
        <div className="flex-1 px-1.5">
          <input
            id={id}
            type="range"
            defaultValue={0}
            className="block w-full h-4 appearance-none bg-transparent [&::-webkit-slider-runnable-track]:h-1 [&::-webkit-slider-runnable-track]:border [&::-webkit-slider-runnable-track]:border-[#d0d0d0] [&::-webkit-slider-runnable-track]:bg-[#e6e6e6] [&::-webkit-slider-thumb]:appearance-none [&::-webkit-slider-thumb]:w-[5px] [&::-webkit-slider-thumb]:h-2 [&::-webkit-slider-thumb]:-mt-[3px] [&::-webkit-slider-thumb]:bg-[#c4c4c4]"
          />
          <div className="flex justify-between px-0.5">
            {Array.from({ length: 11 }, (_, i) => (
              <span key={i} className="w-px h-0.5 bg-[#c4c4c4]" />
            ))}
          </div>
        </div>
        {more ? (
          <button aria-label="Mehr" className="w-[9px] mr-0.5 bg-[#cbcbcb] flex items-center justify-center">
            <Arrow className="text-[#888]" />
          </button>
        ) : (
          <span className="w-[11px]" />
        )}
      </div>
    </div>
  );
}

function Navigator() {
  const faded = "size-4 text-[#3d444a] opacity-50";

  return (
    <aside className="w-[284px] shrink-0 flex flex-col border-l border-[#dcdcdc]">
      <span className="w-[50px] h-px mt-[3px] self-center bg-[#8f8f8f]" />
      <div className="h-[25px] flex items-end justify-between pl-0.5 pb-0.5">
        <button aria-label="Projekt" className="w-[30px] h-5 border border-[#b9b9b9] bg-[#e1e1e1] flex items-center justify-between pl-1.5 pr-0.5">
          <Glyph name="tree" className="size-3.5 text-[#222]" />
          <Arrow />
        </button>
        <div className="flex">
          {["navHouse", "storey", "layout", "stack"].map((icon, i) => (
            <button key={icon} aria-label={icon} className={clsx("w-[21px] h-5 flex items-center justify-center", i === 0 && "bg-[#bcdcf4]")}>
              <Glyph name={icon} className="size-4 text-[#3d444a]" />
            </button>
          ))}
        </div>
      </div>
      <ProjectTree />
      <IconRow className="h-[26px] justify-end gap-[5px] pr-0.5">
        <Glyph name="newView" className="size-4 text-[#3d444a]" />
        <Glyph name="newFolder" className="size-4 text-[#3d444a] opacity-40" />
        <Glyph name="close" className="size-4 text-[#f0a58c]" />
      </IconRow>
      <button className="h-3.5 mx-px flex items-center gap-1.5 pl-1 rounded-sm bg-[#d2d2d2]">
        <Arrow dir="down" />
        Beschreibungen
      </button>
      <div className="h-[19px] flex items-center">
        <Glyph name="box3dDark" className="size-4 text-[#222]" />
        <span className="flex-1 text-center pr-12">Allgemeine Perspektive</span>
      </div>
      <button className="h-4 mx-px border border-[#adadad] bg-[#e1e1e1]">Einstellungen...</button>
      <div className="mt-0.5 h-[9px] border-t border-[#dadada] flex justify-center pt-0.5">
        <span className="w-[50px] h-px bg-[#8f8f8f]" />
      </div>
      <div className="h-5 mx-px flex items-center bg-[#cbcbcb] shrink-0">
        <span className="w-[21px] h-full flex items-center pl-0.5 border-r border-white">
          <Glyph name="square" className={faded} />
        </span>
        <span className="ml-auto">
          <Arrow className="text-[#999]" />
        </span>
      </div>
      <IconRow className="h-7 gap-[5px] pl-1 border-b border-[#a8a8a8]">
        <Glyph name="swap" className={faded} />
        <span className="w-[17px]" />
        <Glyph name="moveBox" className={faded} />
        <Glyph name="rotateBox" className={faded} />
        <Glyph name="mirrorBox" className={faded} />
        <Glyph name="cycle" className={faded} />
      </IconRow>
      <div className="h-[82px] border-b border-[#a8a8a8]">
        <OpacitySlider id="trace" label="Transparentpause:" more />
        <OpacitySlider id="active" label="Aktiv:" />
      </div>
      <IconRow className="h-[30px] gap-[5px] pl-[25px] border-b border-[#dcdcdc]">
        <Glyph name="hand" className={faded} />
        <Glyph name="overlap" className={faded} />
        <Glyph name="splitV" className={faded} />
        <Glyph name="hatch" className={faded} />
      </IconRow>
    </aside>
  );
}

function StatusBar() {
  return (
    <footer className="h-[15px] flex items-center pl-0.5 border-b border-[#8f9aa2]">
      <p className="flex-1 whitespace-nowrap">
        Klicken Sie mit dem Cursor auf ein Element oder ziehen Sie einen Auswahlbereich auf. Drücken Sie für
        Morphbearbeitung Strg/Ctrl+Umsch, um zwischen Element-/Unterelement-Auswahl zu wechseln.
      </p>
      <button aria-label="Fenster" className="pr-px">
        <Glyph name="windows" className="size-3.5 text-[#222]" />
      </button>
      <span className="w-[94px] mr-4 h-full flex items-center justify-center gap-0.5 border-x border-[#dcdcdc] font-[Lato] text-[10px] text-[#222]">
        GRAPHISOFT <span className="text-[#999]">ID</span>
      </span>
    </footer>
  );
}

export default function App() {
  return (
    <div className="min-h-screen flex flex-col bg-[#efefef] border-r-2 border-r-[#5fb9cb] border-b-2 border-b-[#22303f] font-['Open_Sans','Noto_Sans',sans-serif] text-[8px] leading-none text-[#1c1c1c]">
      <TitleBar />
      <MainToolbar />
      <LayerToolbar />
      <SelectionToolbar />
      <div className="flex-1 flex">
        <Toolbox />
        <main className="flex-1 min-w-0 flex flex-col">
          <TabBar />
          <div className="relative flex-1 min-h-0 bg-white">
            <Building />
            <Handle className="top-px left-1/2 -translate-x-1/2" />
            <Handle className="bottom-0 left-1/2 -translate-x-1/2" />
            <Handle vertical className="left-0.5 top-1/2 -translate-y-1/2" />
            <Handle vertical className="right-0.5 top-1/2 -translate-y-1/2" />
          </div>
          <NavigationBar />
        </main>
        <Navigator />
      </div>
      <StatusBar />
    </div>
  );
}
